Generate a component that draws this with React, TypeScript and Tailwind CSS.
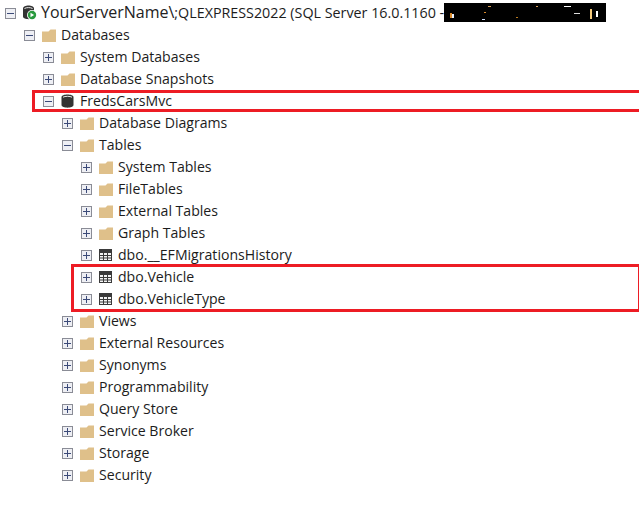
const font = "font-['Open_Sans','Noto_Sans',sans-serif]"

type Kind = 'folder' | 'db' | 'table'
type Row = { level: number; label: string; kind: Kind; open?: boolean }

const rows: Row[] = [
  { level: 1, label: 'Databases', kind: 'folder', open: true },
  { level: 2, label: 'System Databases', kind: 'folder' },
  { level: 2, label: 'Database Snapshots', kind: 'folder' },
  { level: 2, label: 'FredsCarsMvc', kind: 'db', open: true },
  { level: 3, label: 'Database Diagrams', kind: 'folder' },
  { level: 3, label: 'Tables', kind: 'folder', open: true },
  { level: 4, label: 'System Tables', kind: 'folder' },
  { level: 4, label: 'FileTables', kind: 'folder' },
  { level: 4, label: 'External Tables', kind: 'folder' },
  { level: 4, label: 'Graph Tables', kind: 'folder' },
  { level: 4, label: 'dbo.__EFMigrationsHistory', kind: 'table' },
  { level: 4, label: 'dbo.Vehicle', kind: 'table' },
  { level: 4, label: 'dbo.VehicleType', kind: 'table' },
  { level: 3, label: 'Views', kind: 'folder' },
  { level: 3, label: 'External Resources', kind: 'folder' },
  { level: 3, label: 'Synonyms', kind: 'folder' },
  { level: 3, label: 'Programmability', kind: 'folder' },
  { level: 3, label: 'Query Store', kind: 'folder' },
  { level: 3, label: 'Service Broker', kind: 'folder' },
  { level: 3, label: 'Storage', kind: 'folder' },
  { level: 3, label: 'Security', kind: 'folder' },
]

const indent = ['pl-[5px]', 'pl-[24px]', 'pl-[43px]', 'pl-[62px]', 'pl-[81px]']

function Expander({ open }: { open?: boolean }) {
  return (
    <svg width="11" height="11" viewBox="0 0 11 11" className="shrink-0">
      <rect x="0.5" y="0.5" width="10" height="10" fill="#eeeff4" stroke="#8a8c96" />
      <path d="M2 5.500h7" stroke="#3b4a78" />
      {!open && <path d="M5.500 2v7" stroke="#3b4a78" />}
    </svg>
  )
}

function Folder() {
  return (
    <svg width="14" height="13" viewBox="0 0 14 13" className="shrink-0">
      <path d="M0 13V2.500h6.500L8.500 0.500H14V13z" fill="#dfc08a" />
    </svg>
  )
}

function Db() {
  return (
    <svg width="13" height="14" viewBox="0 0 13 14" className="shrink-0">
      <path d="M.500 3c0-3.500 12-3.500 12 0v8c0 3.500-12 3.500-12 0z" fill="#333" />
      <path d="M2 3.200c2-1.200 7-1.200 9 0" stroke="#e8e8e8" fill="none" />
    </svg>
  )
}

function TableIcon() {
  return (
    <svg width="13" height="12" viewBox="0 0 13 12" className="shrink-0">
      <rect width="13" height="12" fill="#3a3a3a" />
      <path
        d="M1 4h3v2H1zM5 4h3v2H5zM9 4h3v2H9zM1 7h3v1.500H1zM5 7h3v1.500H5zM9 7h3v1.500H9zM1 9.500h3V11H1zM5 9.500h3V11H5zM9 9.500h3V11H9z"
        fill="#f4f4f4"
      />
    </svg>
  )
}

function ServerIcon() {
  return (
    <svg width="14" height="15" viewBox="0 0 14 15" className="shrink-0">
      <path d="M0 3.500c0-4 11-4 11 0v8c0 3.500-11 3.500-11 0z" fill="#333" />
      <path d="M1.500 3.500c2-1.200 6-1.200 8 0" stroke="#eee" fill="none" />
      <circle cx="9" cy="10" r="5" fill="#fff" />
      <circle cx="9" cy="10" r="4.200" fill="#2a9a3e" />
      <path d="M7.500 7.800v4.400l3.600-2.200z" fill="#fff" />
    </svg>
  )
}

function TreeRow({ row }: { row: Row }) {
  return (
    <div className={`flex h-[22px] items-center ${indent[row.level]}`}>
      <Expander open={row.open} />
      <span className="ml-[7px] flex w-[19px] shrink-0">
        {row.kind === 'folder' && <Folder />}
        {row.kind === 'db' && <Db />}
        {row.kind === 'table' && <TableIcon />}
      </span>
      <span className="text-[14.100px] whitespace-nowrap text-[#1c1c1c]">{row.label}</span>
    </div>
  )
}

// little coloured bits left over at the edges of the scribble
const specks = [
  { x: 6, y: 10, w: 2, h: 5, c: '#d98a2b' },
  { x: 8, y: 11, w: 2, h: 4, c: '#e8f0ff' },
  { x: 44, y: 3, w: 3, h: 1, c: '#d9a05a' },
  { x: 40, y: 9, w: 2, h: 1, c: '#d98a2b' },
  { x: 38, y: 16, w: 3, h: 1, c: '#cfe0ff' },
  { x: 92, y: 3, w: 2, h: 1, c: '#d9a05a' },
  { x: 120, y: 3, w: 7, h: 1, c: '#ffffff' },
  { x: 130, y: 10, w: 6, h: 1, c: '#dddddd' },
  { x: 146, y: 6, w: 2, h: 10, c: '#f2c879' },
  { x: 152, y: 8, w: 2, h: 6, c: '#ffffff' },
  { x: 72, y: 14, w: 2, h: 1, c: '#b8791f' },
]

export default function App() {
  return (
    <div className={`relative h-[506px] w-[639px] overflow-hidden bg-white pt-[2px] ${font}`}>
      <div className="flex h-[22px] items-center pl-[5px]">
        <Expander open />
        <span className="mb-[1px] ml-[7px] w-[18px] shrink-0">
          <ServerIcon />
        </span>
        <span className="mb-[2px] text-[16px] whitespace-nowrap text-[#222]">YourServerName\</span>
        <span className="mb-[1px] text-[14.300px] whitespace-nowrap text-[#1c1c1c]">
          ;QLEXPRESS2022 (SQL Server 16.0.1160 -
        </span>
      </div>
      {rows.map((row) => (
        <TreeRow key={row.label} row={row} />
      ))}

      {/* redaction scribble */}
      <div className="absolute top-[3px] left-[444px] h-[19px] w-[162px] bg-black">
        {specks.map((s, i) => (
          <span
            key={i}
            className="absolute"
            style={{ left: s.x, top: s.y, width: s.w, height: s.h, background: s.c }}
          />
        ))}
      </div>

      {/* red callouts */}
      <div className="absolute top-[90px] left-[32px] h-[22px] w-[620px] border-[3px] border-[#ed1c24]" />
      <div className="absolute top-[264px] left-[71px] h-[48px] w-[570px] border-[3px] border-[#ed1c24]" />
    </div>
  )
}
